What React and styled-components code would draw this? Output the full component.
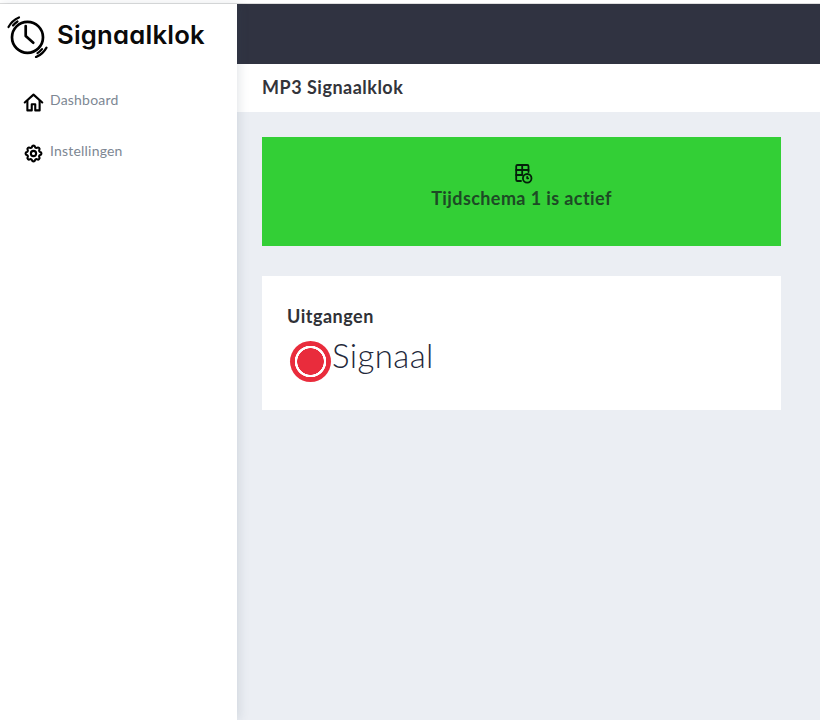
import React from "react"
import styled, { createGlobalStyle } from "styled-components"

const GlobalStyle = createGlobalStyle`
  html, body {
    margin: 0;
    padding: 0;
    height: 100%;
    overflow: hidden;
    background: #ebeef3;
    font-family: "Lato", "Noto Sans", sans-serif;
  }
  * {
    box-sizing: border-box;
  }
`

const Page = styled.div`
  display: flex;
  flex-direction: column;
  width: 820px;
  height: 720px;
`

const TopLine = styled.div`
  height: 4px;
  flex-shrink: 0;
  background: #ffffff;
  border-bottom: 1px solid #dedede;
`

const Body = styled.div`
  display: flex;
  flex: 1;
  min-height: 0;
`

const Sidebar = styled.aside`
  position: relative;
  z-index: 1;
  width: 237px;
  flex-shrink: 0;
  background: #ffffff;
  box-shadow: 2px 0 10px rgba(60, 75, 100, 0.14);
`

const Brand = styled.div`
  display: flex;
  align-items: center;
  height: 60px;
  padding-left: 6px;
  gap: 9px;
`

const BrandName = styled.span`
  font-family: "Inter", "Liberation Sans", sans-serif;
  font-feature-settings: "cv11" 1;
  font-size: 25.7px;
  font-weight: 600;
  letter-spacing: 0.2px;
  color: #0a0a0a;
`

const LogoMark = styled.svg`
  width: 42px;
  height: 46px;
  margin-top: 2px;
  flex-shrink: 0;
  fill: none;
  stroke: #000000;
  stroke-linecap: round;
  stroke-linejoin: round;
`

const Nav = styled.nav`
  display: flex;
  flex-direction: column;
  gap: 31px;
  padding: 28px 0 0 23px;
`

const NavItem = styled.a`
  display: flex;
  align-items: flex-start;
  gap: 6px;
  height: 20px;
  font-size: 14px;
  line-height: 16px;
  letter-spacing: 0.2px;
  color: #7d8793;
`

const NavIcon = styled.svg`
  width: 21px;
  height: 21px;
  flex-shrink: 0;
  fill: none;
  stroke: #000000;
  stroke-width: 2.4;
  stroke-linecap: round;
  stroke-linejoin: round;
`

const Main = styled.main`
  display: flex;
  flex-direction: column;
  flex: 1;
  min-width: 0;
`

const DarkHeader = styled.header`
  height: 60px;
  flex-shrink: 0;
  background: #303341;
`

const SubHeader = styled.div`
  display: flex;
  align-items: center;
  height: 48px;
  flex-shrink: 0;
  padding: 0 25px 2px;
  background: #ffffff;
  font-size: 18px;
  font-weight: 700;
  letter-spacing: 0.5px;
  color: #33343a;
`

const Content = styled.div`
  display: flex;
  flex-direction: column;
  gap: 30px;
  padding: 25px 39px 0 25px;
`

const StatusCard = styled.section`
  display: flex;
  flex-direction: column;
  align-items: center;
  height: 109px;
  padding-top: 26px;
  background: #33cf36;
  color: #1d4a25;
  font-size: 18px;
  font-weight: 700;
  line-height: 24px;
  letter-spacing: 0.4px;
`

const ScheduleIcon = styled.svg`
  width: 20px;
  height: 21px;
  margin: 0 0 2px 4px;
  fill: none;
  stroke: #04200a;
  stroke-width: 1.8;
  stroke-linecap: round;
  stroke-linejoin: round;
`

const OutputCard = styled.section`
  height: 134px;
  padding: 28px 25px 0;
  background: #ffffff;
`

const CardTitle = styled.h2`
  margin: 0;
  font-size: 18px;
  line-height: 24px;
  font-weight: 700;
  letter-spacing: 0.5px;
  color: #2f3136;
`

const OutputRow = styled.div`
  display: flex;
  align-items: center;
  gap: 1px;
  margin: 13px 0 0 3px;
`

const Lamp = styled.span`
  width: 41px;
  height: 41px;
  flex-shrink: 0;
  border-radius: 50%;
  background: radial-gradient(circle, #e92c3c 0 13px, #ffffff 13.5px 15.5px, #e92c3c 16px);
`

const OutputLabel = styled.span`
  font-size: 33px;
  line-height: 36px;
  font-weight: 300;
  letter-spacing: 0.4px;
  color: #23283a;
  margin-top: -14px;
`

const LogoClock = () => (
  <LogoMark viewBox="6 12 42 46">
    <circle cx="27.5" cy="37.3" r="15.5" strokeWidth="2.7" />
    <path d="M25.7 26v10l7.600 6.700" strokeWidth="2.7" />
    <path d="M8.500 27A21.500 21.500 0 0 1 19 17.500M13 25.500A18.500 18.500 0 0 1 17.500 21.500" strokeWidth="2.2" />
    <path d="M46.500 47.600A21.500 21.500 0 0 1 36 57.100M42 49.100A18.500 18.500 0 0 1 37.500 53.100" strokeWidth="2.2" />
  </LogoMark>
)

const App = () => (
  <Page>
    <GlobalStyle />
    <TopLine />
    <Body>
      <Sidebar>
        <Brand>
          <LogoClock />
          <BrandName>Signaalklok</BrandName>
        </Brand>
        <Nav>
          <NavItem>
            <NavIcon viewBox="0 0 24 24">
              <path d="M2 12 12 3l10 9" />
              <path d="M5 10v11h5v-7h4v7h5V10" />
            </NavIcon>
            Dashboard
          </NavItem>
          <NavItem>
            <NavIcon viewBox="0 0 24 24">
              <path d="M10.300 4.300c.4-1.800 3-1.800 3.400 0a1.700 1.700 0 0 0 2.600 1.100c1.500-.9 3.300.8 2.400 2.400a1.700 1.700 0 0 0 1 2.500c1.800.4 1.800 3 0 3.400a1.700 1.700 0 0 0-1 2.600c.9 1.500-.9 3.300-2.400 2.400a1.700 1.700 0 0 0-2.600 1c-.4 1.800-3 1.800-3.400 0a1.700 1.700 0 0 0-2.600-1c-1.500.9-3.300-.9-2.400-2.400a1.700 1.700 0 0 0-1-2.600c-1.800-.4-1.800-3 0-3.400a1.700 1.700 0 0 0 1-2.500c-.9-1.600.9-3.300 2.400-2.400a1.700 1.700 0 0 0 2.600-1.100Z" />
              <circle cx="12" cy="12" r="3" />
            </NavIcon>
            Instellingen
          </NavItem>
        </Nav>
      </Sidebar>
      <Main>
        <DarkHeader />
        <SubHeader>MP3 Signaalklok</SubHeader>
        <Content>
          <StatusCard>
            <ScheduleIcon viewBox="513.500 163 20 21">
              <path d="M520.500 181H517a1.300 1.300 0 0 1-1.300-1.300V166.300a1.300 1.300 0 0 1 1.300-1.300h9.700a1.300 1.300 0 0 1 1.300 1.300V172" />
              <path d="M515.700 170H528M515.700 175h6M521.700 165v10" />
              <circle cx="526.700" cy="178.300" r="4.300" />
              <path d="M526.700 176.800v1.500h1" />
            </ScheduleIcon>
            Tijdschema 1 is actief
          </StatusCard>
          <OutputCard>
            <CardTitle>Uitgangen</CardTitle>
            <OutputRow>
              <Lamp />
              <OutputLabel>Signaal</OutputLabel>
            </OutputRow>
          </OutputCard>
        </Content>
      </Main>
    </Body>
  </Page>
)

export default App
